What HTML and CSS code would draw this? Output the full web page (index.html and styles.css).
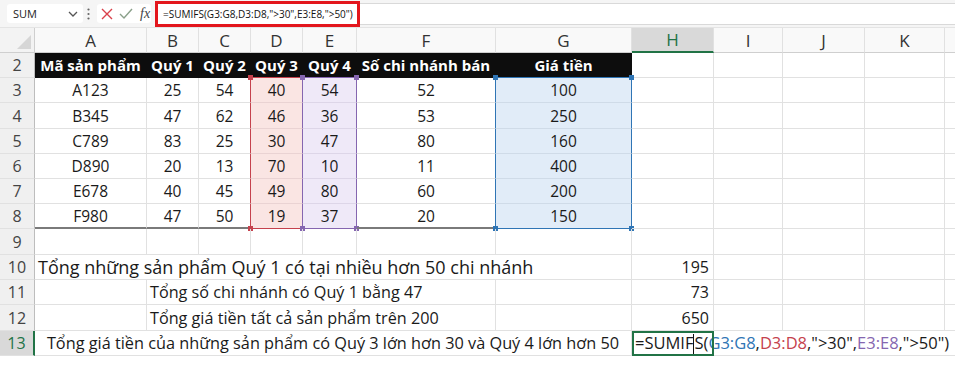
FILE: index.html
```html
<!DOCTYPE html>
<html>
<head>
    <title>SUMIFS</title>
    <link rel="stylesheet" href="styles.css">
</head>
<body>
    <div class="formula-bar">
        <div class="name-box">
            <span>SUM</span>
            <svg width="10" height="6" viewBox="0 0 10 6"><polyline points="1,1 5,5 9,1" fill="none" stroke="#555" stroke-width="1.3"/></svg>
        </div>
        <svg class="grip" width="3" height="12" viewBox="0 0 3 12"><circle cx="1.5" cy="1.5" r="1.1" fill="#666"/><circle cx="1.5" cy="6" r="1.1" fill="#666"/><circle cx="1.5" cy="10.5" r="1.1" fill="#666"/></svg>
        <div class="fx-buttons">
            <svg width="12" height="12" viewBox="0 0 12 12"><path d="M1 1 L11 11 M11 1 L1 11" stroke="#d9414b" stroke-width="1.4" fill="none"/></svg>
            <svg width="14" height="12" viewBox="0 0 14 12"><polyline points="1,6 5,10 13,1" stroke="#8aa08a" stroke-width="1.4" fill="none"/></svg>
            <span class="fx">fx</span>
        </div>
        <div class="formula-input">
            <span class="formula-mark">=SUMIFS(G3:G8,D3:D8,"&gt;30",E3:E8,"&gt;50")</span>
        </div>
    </div>

    <table class="sheet">
        <colgroup>
            <col style="width:35px">
            <col style="width:112px">
            <col style="width:52px">
            <col style="width:52px">
            <col style="width:52px">
            <col style="width:54px">
            <col style="width:139px">
            <col style="width:136px">
            <col style="width:82px">
            <col style="width:69px">
            <col style="width:82px">
            <col style="width:80px">
            <col style="width:10px">
        </colgroup>
        <thead>
            <tr>
                <th class="corner"><span class="tri"></span></th>
                <th class="ch">A</th>
                <th class="ch">B</th>
                <th class="ch">C</th>
                <th class="ch">D</th>
                <th class="ch">E</th>
                <th class="ch">F</th>
                <th class="ch">G</th>
                <th class="ch active">H</th>
                <th class="ch">I</th>
                <th class="ch">J</th>
                <th class="ch">K</th>
                <th class="ch last"></th>
            </tr>
        </thead>
        <tbody>
            <tr>
                <th class="rh">2</th>
                <td class="hd">Mã sản phẩm</td>
                <td class="hd">Quý 1</td>
                <td class="hd">Quý 2</td>
                <td class="hd top-red">Quý 3</td>
                <td class="hd top-purple">Quý 4</td>
                <td class="hd">Số chi nhánh bán</td>
                <td class="hd top-blue">Giá tiền</td>
                <td></td><td></td><td></td><td></td><td class="last"></td>
            </tr>
            <tr>
                <th class="rh">3</th>
                <td>A123</td><td>25</td><td class="edge-red">54</td>
                <td class="sel-d"><span class="hdl tl red"></span>40</td>
                <td class="sel-e"><span class="hdl tl purple"></span><span class="hdl tr purple"></span>54</td>
                <td class="edge-blue">52</td>
                <td class="sel-g"><span class="hdl tl blue"></span><span class="hdl tr blue"></span>100</td>
                <td></td><td></td><td></td><td></td><td class="last"></td>
            </tr>
            <tr class="tall">
                <th class="rh">4</th>
                <td>B345</td><td>47</td><td class="edge-red">62</td>
                <td class="sel-d">46</td><td class="sel-e">36</td>
                <td class="edge-blue">53</td><td class="sel-g">250</td>
                <td></td><td></td><td></td><td></td><td class="last"></td>
            </tr>
            <tr>
                <th class="rh">5</th>
                <td>C789</td><td>83</td><td class="edge-red">25</td>
                <td class="sel-d">30</td><td class="sel-e">47</td>
                <td class="edge-blue">80</td><td class="sel-g">160</td>
                <td></td><td></td><td></td><td></td><td class="last"></td>
            </tr>
            <tr>
                <th class="rh">6</th>
                <td>D890</td><td>20</td><td class="edge-red">13</td>
                <td class="sel-d">70</td><td class="sel-e">10</td>
                <td class="edge-blue">11</td><td class="sel-g">400</td>
                <td></td><td></td><td></td><td></td><td class="last"></td>
            </tr>
            <tr>
                <th class="rh">7</th>
                <td>E678</td><td>40</td><td class="edge-red">45</td>
                <td class="sel-d">49</td><td class="sel-e">80</td>
                <td class="edge-blue">60</td><td class="sel-g">200</td>
                <td></td><td></td><td></td><td></td><td class="last"></td>
            </tr>
            <tr>
                <th class="rh">8</th>
                <td class="total-line">F980</td><td class="total-line">47</td><td class="edge-red total-line">50</td>
                <td class="sel-d bottom-red"><span class="hdl bl red"></span>19</td>
                <td class="sel-e bottom-purple"><span class="hdl bl purple"></span><span class="hdl br purple"></span>37</td>
                <td class="edge-blue total-line">20</td>
                <td class="sel-g bottom-blue"><span class="hdl bl blue"></span><span class="hdl br blue"></span>150</td>
                <td></td><td></td><td></td><td></td><td class="last"></td>
            </tr>
            <tr class="tall">
                <th class="rh">9</th>
                <td></td><td></td><td></td><td></td><td></td><td></td><td></td>
                <td></td><td></td><td></td><td></td><td class="last"></td>
            </tr>
            <tr>
                <th class="rh">10</th>
                <td colspan="7" class="note big">Tổng những sản phẩm Quý 1 có tại nhiều hơn 50 chi nhánh</td>
                <td class="value">195</td>
                <td></td><td></td><td></td><td class="last"></td>
            </tr>
            <tr>
                <th class="rh">11</th>
                <td></td>
                <td colspan="5" class="note">Tổng số chi nhánh có Quý 1 bằng 47</td>
                <td></td>
                <td class="value">73</td>
                <td></td><td></td><td></td><td class="last"></td>
            </tr>
            <tr class="tall">
                <th class="rh">12</th>
                <td></td>
                <td colspan="5" class="note">Tổng giá tiền tất cả sản phẩm trên 200</td>
                <td></td>
                <td class="value">650</td>
                <td></td><td></td><td></td><td class="last"></td>
            </tr>
            <tr>
                <th class="rh active">13</th>
                <td colspan="7" class="question">Tổng giá tiền của những sản phẩm có Quý 3 lớn hơn 30 và Quý 4 lớn hơn 50</td>
                <td class="editing">=SUMIF<span class="caret"></span>S(<span class="ref-blue">G3:G8</span>,<span class="ref-red">D3:D8</span>,"&gt;30",<span class="ref-purple">E3:E8</span>,"&gt;50")</td>
                <td class="open"></td><td class="open"></td><td class="open"></td><td class="last"></td>
            </tr>
        </tbody>
    </table>
</body>
</html>
```

FILE: styles.css
```css
body {
    margin: 0;
    background: #fff;
    font-family: "Open Sans", "Liberation Sans", sans-serif;
    color: #1a1a1a;
    width: 955px;
    height: 372px;
    overflow: hidden;
}

/* formula bar */
.formula-bar {
    display: flex;
    align-items: center;
    height: 28px;
    background: #f5f5f5;
    border-bottom: 1px solid #e4e4e4;
    box-sizing: border-box;
}

.name-box {
    margin-left: 7px;
    width: 76px;
    height: 19px;
    background: #fff;
    border-radius: 3px;
    display: flex;
    align-items: center;
    justify-content: space-between;
    padding: 0 5px 0 6px;
    box-sizing: border-box;
    font-size: 11px;
    color: #222;
}

.grip {
    margin-left: 4px;
}

.fx-buttons {
    margin-left: 7px;
    width: 54px;
    height: 19px;
    background: #fff;
    border-radius: 3px;
    display: flex;
    align-items: center;
    gap: 6px;
    padding-left: 4px;
    box-sizing: border-box;
}

.fx {
    font-family: "Liberation Serif", serif;
    font-style: italic;
    font-size: 14px;
    color: #444;
    margin-left: 1px;
}

.formula-input {
    margin-left: 4px;
    flex: 1;
    height: 20px;
    background: #fff;
    border-top: 1px solid #d9d9d9;
    border-bottom: 1px solid #d9d9d9;
    display: flex;
    align-items: center;
}

.formula-mark {
    font-size: 10px;
    color: #111;
    padding: 3px 4px 3px 5px;
    border: 3px solid #e3161d;
}

/* grid */
.sheet {
    border-collapse: separate;
    border-spacing: 0;
    table-layout: fixed;
    width: 955px;
}

.sheet tr {
    height: 25px;
}

.sheet tr.tall {
    height: 26px;
}

.sheet td,
.sheet th {
    padding: 0;
    border-right: 1px solid #e1e1e1;
    border-bottom: 1px solid #e1e1e1;
    white-space: nowrap;
    text-align: center;
    font-size: 15.5px;
    font-weight: normal;
    position: relative;
    overflow: visible;
}

.sheet .last {
    border-right: none;
}

.corner {
    background: #f3f3f3;
    border-bottom-color: #cfcfcf !important;
    border-right-color: #cfcfcf !important;
}

.tri {
    position: absolute;
    right: 3px;
    bottom: 3px;
    width: 0;
    height: 0;
    border-left: 14px solid transparent;
    border-bottom: 14px solid #d6d6d6;
}

.ch {
    background: #f9f9f9;
    color: #333;
    font-size: 17px !important;
    border-bottom-color: #cfcfcf !important;
}

.ch.active {
    background: #d9d9d9;
    color: #217346;
    border-bottom: 2px solid #217346 !important;
}

.rh {
    background: #f0f0f0;
    color: #444;
    font-size: 16px !important;
    border-right-color: #bdbdbd !important;
}

.rh.active {
    background: #d9d9d9;
    color: #217346;
    border-right: 2px solid #217346 !important;
}

.hd {
    background: #0d0d0d;
    color: #fff;
    font-size: 15px !important;
    font-weight: 700 !important;
    border-right-color: #0d0d0d !important;
    border-bottom-color: #0d0d0d !important;
}

.top-red { border-bottom-color: #c5424d !important; }
.top-purple { border-bottom-color: #8566b0 !important; }
.top-blue { border-bottom-color: #2f75b5 !important; }

/* coloured ranges of the formula */
.edge-red { border-right-color: #c5424d !important; }
.edge-blue { border-right-color: #2f75b5 !important; }

.sel-d {
    background: #fae5e3;
    border-right-color: #8566b0 !important;
    border-bottom-color: #ead3d3 !important;
}

.sel-e {
    background: #efe9f8;
    border-right-color: #8566b0 !important;
    border-bottom-color: #ddd6e8 !important;
}

.sel-g {
    background: #e1ecf8;
    border-right-color: #2f75b5 !important;
    border-bottom-color: #cfdbe8 !important;
}

.bottom-red { border-bottom-color: #c5424d !important; }
.bottom-purple { border-bottom-color: #8566b0 !important; }
.bottom-blue { border-bottom-color: #2f75b5 !important; }

.total-line {
    border-bottom: 2px solid #7a7a7a !important;
}

.hdl {
    position: absolute;
    width: 5px;
    height: 5px;
}

.hdl.tl { top: -3px; left: -3px; }
.hdl.tr { top: -3px; right: -3px; }
.hdl.bl { bottom: -3px; left: -3px; }
.hdl.br { bottom: -3px; right: -3px; }

.hdl.red { background: #c5424d; }
.hdl.purple { background: #8566b0; }
.hdl.blue { background: #2f75b5; }

/* notes below the table */
.note {
    text-align: left !important;
    padding-left: 3px !important;
    font-size: 16.2px !important;
}

.note.big {
    font-size: 18px !important;
}

.question {
    font-size: 16.3px !important;
}

.value {
    text-align: right !important;
    padding-right: 4px !important;
    font-size: 16px !important;
}

.editing {
    text-align: left !important;
    padding-left: 3px !important;
    font-size: 16.5px !important;
    outline: 2px solid #217346;
    outline-offset: -2px;
}

.open {
    border-right: none !important;
}

.caret {
    display: inline-block;
    width: 0;
    height: 21px;
    border-left: 1px solid #111;
    vertical-align: middle;
}

.ref-blue { color: #2f75b5; }
.ref-red { color: #c5424d; }
.ref-purple { color: #8566b0; }
```
